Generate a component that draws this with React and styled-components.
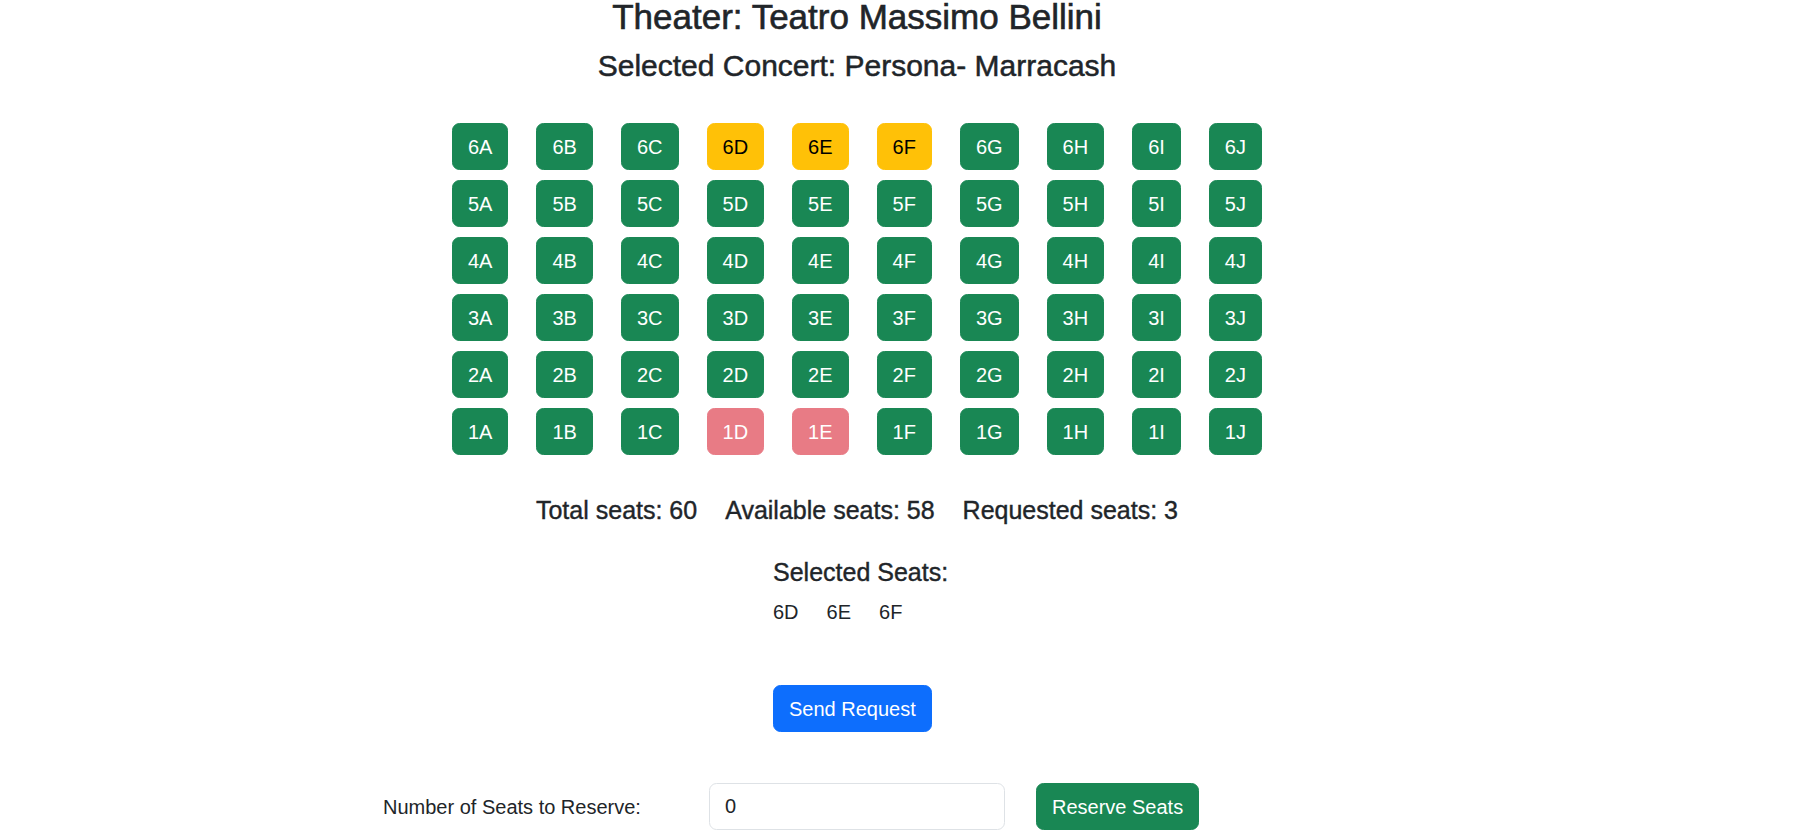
import React from "react";
import styled, { createGlobalStyle } from "styled-components";

const GlobalStyle = createGlobalStyle`
  body {
    margin: 0;
    font-family: "Liberation Sans", Arial, sans-serif;
    color: #212529;
    background: #fff;
    font-size: 20px;
  }
  * { box-sizing: border-box; }
`;

const Page = styled.main`
  display: flex;
  flex-direction: column;
  align-items: center;
  width: 1714px;
  margin-top: -4px;
`;

const Title = styled.h3`
  margin: 0 0 10px;
  font-size: 35px;
  font-weight: 500;
  line-height: 42px;
  -webkit-text-stroke: 0.6px currentColor;
`;

const Subtitle = styled.h4`
  margin: 0;
  font-size: 30px;
  font-weight: 500;
  line-height: 36px;
  -webkit-text-stroke: 0.5px currentColor;
`;

const SeatGrid = styled.div`
  display: flex;
  flex-direction: column;
  gap: 10px;
  margin-top: 39px;
`;

const SeatRow = styled.div`
  display: flex;
  justify-content: center;
  gap: 28px;
`;

const Button = styled.button`
  font-family: inherit;
  font-size: 20px;
  line-height: 30px;
  padding: 7.5px 15px;
  border: 1.25px solid transparent;
  border-radius: 7.5px;
  cursor: pointer;
  color: #fff;
  background: #198754;
  border-color: #198754;
  white-space: nowrap;
`;

const seatColors = {
  free: { bg: "#198754", fg: "#fff", op: 1 },
  requested: { bg: "#ffc107", fg: "#000", op: 1 },
  taken: { bg: "#dc3545", fg: "#fff", op: 0.65 },
};

const SeatButton = styled(Button)`
  background: ${(p) => seatColors[p.$state].bg};
  border-color: ${(p) => seatColors[p.$state].bg};
  color: ${(p) => seatColors[p.$state].fg};
  opacity: ${(p) => seatColors[p.$state].op};
`;

const Stats = styled.div`
  display: flex;
  gap: 28px;
  margin-top: 40px;
`;

const StatText = styled.h5`
  margin: 0;
  font-size: 25px;
  font-weight: 500;
  line-height: 30px;
  white-space: nowrap;
  -webkit-text-stroke: 0.4px currentColor;
`;

const SelectedBlock = styled.div`
  width: 168px;
  display: flex;
  flex-direction: column;
  align-items: flex-start;
  margin-top: 32px;
`;

const SelectedList = styled.div`
  display: flex;
  gap: 28px;
  margin-top: 10px;
  line-height: 30px;
`;

const SendButton = styled(Button)`
  margin-top: 58px;
  background: #0d6efd;
  border-color: #0d6efd;
`;

const ReserveRow = styled.div`
  align-self: stretch;
  display: flex;
  align-items: center;
  padding-left: 383px;
  margin-top: 51px;
`;

const Label = styled.label`
  width: 326px;
  font-size: 20px;
  line-height: 30px;
`;

const NumberInput = styled.input`
  width: 296px;
  height: 47px;
  padding: 7.5px 15px;
  font-family: inherit;
  font-size: 20px;
  color: #212529;
  border: 1.25px solid #dee2e6;
  border-radius: 7.5px;
  outline: none;
`;

const ReserveButton = styled(Button)`
  margin-left: 31px;
`;

const cols = ["A", "B", "C", "D", "E", "F", "G", "H", "I", "J"];
const rows = [6, 5, 4, 3, 2, 1];
const requested = ["6D", "6E", "6F"];
const taken = ["1D", "1E"];

const seatState = (id) =>
  requested.includes(id) ? "requested" : taken.includes(id) ? "taken" : "free";

export default function App() {
  return (
    <>
      <GlobalStyle />
      <Page>
        <Title>Theater: Teatro Massimo Bellini</Title>
        <Subtitle>Selected Concert: Persona- Marracash</Subtitle>

        <SeatGrid>
          {rows.map((r) => (
            <SeatRow key={r}>
              {cols.map((c) => {
                const id = `${r}${c}`;
                return (
                  <SeatButton key={id} $state={seatState(id)}>
                    {id}
                  </SeatButton>
                );
              })}
            </SeatRow>
          ))}
        </SeatGrid>

        <Stats>
          <StatText>Total seats: 60</StatText>
          <StatText>Available seats: 58</StatText>
          <StatText>Requested seats: 3</StatText>
        </Stats>

        <SelectedBlock>
          <StatText>Selected Seats:</StatText>
          <SelectedList>
            {requested.map((s) => (
              <span key={s}>{s}</span>
            ))}
          </SelectedList>
          <SendButton>Send Request</SendButton>
        </SelectedBlock>

        <ReserveRow>
          <Label>Number of Seats to Reserve:</Label>
          <NumberInput type="number" defaultValue={0} />
          <ReserveButton>Reserve Seats</ReserveButton>
        </ReserveRow>
      </Page>
    </>
  );
}
